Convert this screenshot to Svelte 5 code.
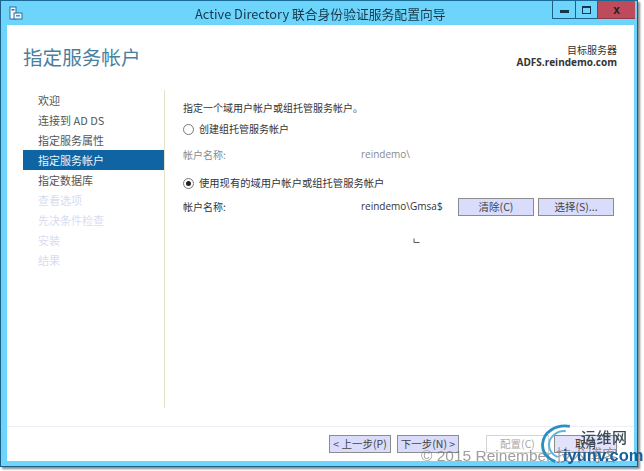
<script>
  const steps = [
    { label: '欢迎', state: 'done' },
    { label: '连接到 AD DS', state: 'done' },
    { label: '指定服务属性', state: 'done' },
    { label: '指定服务帐户', state: 'active' },
    { label: '指定数据库', state: 'done' },
    { label: '查看选项', state: 'off' },
    { label: '先决条件检查', state: 'off' },
    { label: '安装', state: 'off' },
    { label: '结果', state: 'off' }
  ];
</script>

<div class="stage">
  <div class="window">
    <header class="titlebar">
      <svg class="appicon" viewBox="0 0 14 14" width="14" height="14">
        <rect x="1" y="1" width="6" height="12" fill="#f4fbff" stroke="#2f6d9c" stroke-width="1" />
        <rect x="2.5" y="3" width="3" height="1.5" fill="#2f6d9c" />
        <rect x="5" y="7" width="8" height="6" fill="#e8f6ff" stroke="#2f6d9c" stroke-width="1" />
        <rect x="7" y="9" width="4" height="1.5" fill="#4f8fbd" />
      </svg>
      <div class="title">Active Directory 联合身份验证服务配置向导</div>
      <div class="controls">
        <div class="ctl min"><span></span></div>
        <div class="ctl max"><span></span></div>
        <div class="ctl close">x</div>
      </div>
    </header>

    <div class="client">
      <div class="head">
        <h1>指定服务帐户</h1>
        <div class="target">
          <div>目标服务器</div>
          <div class="server">ADFS.reindemo.com</div>
        </div>
      </div>

      <div class="body">
        <nav class="steps">
          {#each steps as s}
            <div class="step {s.state}">{s.label}</div>
          {/each}
        </nav>

        <main class="pane">
          <p class="lead">指定一个域用户帐户或组托管服务帐户。</p>
          <div class="radio r1"><i class="dot"></i>创建组托管服务帐户</div>
          <div class="field f1 dim"><span class="k">帐户名称:</span><span class="v">reindemo\</span></div>
          <div class="radio r2"><i class="dot on"></i>使用现有的域用户帐户或组托管服务帐户</div>
          <div class="field f2">
            <span class="k">帐户名称:</span><span class="v">reindemo\Gmsa$</span>
            <button class="btn b1">清除(C)</button>
            <button class="btn b2">选择(S)...</button>
          </div>
          <svg class="cursor" width="7" height="6" viewBox="0 0 7 6"><path d="M1 0.5V4.5H6.5" fill="none" stroke="#555" stroke-width="1" /></svg>
        </main>
      </div>

      <footer class="foot">
        <button class="btn nav">&lt; 上一步(P)</button>
        <button class="btn nav next">下一步(N) &gt;</button>
        <button class="btn nav disabled">配置(C)</button>
        <button class="btn nav cancel">取消</button>
      </footer>
    </div>
  </div>

  <div class="copy">© 2015 Reinember 技术博客</div>
  <div class="logo">
    <svg class="arc" width="50" height="40" viewBox="0 0 62 50">
      <path d="M37 3C20 0 4 10 3 25C2 36 10 44 19 47" fill="none" stroke="#2b8fc4" stroke-width="3.5" />
      <path d="M32 9C21 8 11 16 11 26C11 33 15 38 21 41" fill="none" stroke="#5db4dd" stroke-width="2.5" />
    </svg>
    <div class="cn">运维网</div>
    <div class="en">iyunv.com</div>
  </div>
</div>

<style>
  :global(body) {
    margin: 0;
    background: #fff;
  }
  .stage {
    position: relative;
    width: 644px;
    height: 471px;
    overflow: hidden;
    font-family: "Noto Sans CJK SC", "Noto Sans", sans-serif;
    font-size: 10px;
    color: #333;
  }
  .window {
    width: 638px;
    height: 467px;
    box-sizing: border-box;
    display: flex;
    flex-direction: column;
    background: #6dd5fb;
    border: 1px solid #1d5f86;
    border-top-color: #1a6a96;
    box-shadow: 2px 2px 2px #8a8a8a;
    filter: blur(0.35px);
  }
  .titlebar {
    height: 24px;
    flex: none;
    display: flex;
    align-items: flex-start;
    position: relative;
  }
  .appicon {
    margin: 5px 0 0 8px;
  }
  .title {
    position: absolute;
    left: 194px;
    top: 5px;
    font-size: 12.8px;
    line-height: 16px;
    color: #17384c;
    white-space: nowrap;
  }
  .controls {
    margin-left: auto;
    margin-right: 2px;
    display: flex;
    height: 18px;
  }
  .ctl {
    height: 18px;
    box-sizing: border-box;
    display: flex;
    align-items: center;
    justify-content: center;
    border-bottom: 1px solid #1d5f86;
    border-left: 1px solid #1d5f86;
  }
  .min { width: 23px; }
  .min span { width: 9px; height: 3px; background: #17384c; margin-top: 3px; }
  .max { width: 22px; }
  .max span { width: 9px; height: 8px; box-sizing: border-box; border: 1px solid #17384c; border-top-width: 2px; }
  .close {
    width: 38px;
    background: #bd4b5c;
    color: #222;
    font: bold 12px "Liberation Sans", sans-serif;
    border-color: #8d3a48;
  }
  .client {
    flex: 1;
    margin: 0 3px 5px 6px;
    background: #fff;
    display: flex;
    flex-direction: column;
    min-height: 0;
  }
  .head {
    height: 65px;
    flex: none;
    display: flex;
    justify-content: space-between;
    box-sizing: border-box;
    padding: 20px 17px 0 16px;
  }
  h1 {
    margin: 0;
    font-size: 19.6px;
    line-height: 24px;
    font-weight: 400;
    color: #4b7f9f;
  }
  .target {
    text-align: right;
    font-size: 10px;
    line-height: 13px;
    margin-top: -2px;
    color: #333;
  }
  .server {
    font-weight: 700;
    font-family: "Open Sans", "Noto Sans", sans-serif;
    font-size: 10px;
  }
  .body {
    height: 318px;
    flex: none;
    display: flex;
  }
  .steps {
    width: 141px;
    margin-left: 16px;
    flex: none;
    border-right: 1px solid #e4e2c8;
    box-sizing: content-box;
    font-size: 11px;
  }
  .step {
    height: 20px;
    line-height: 20px;
    padding-left: 15px;
    white-space: nowrap;
    color: #555;
  }
  .step.active { background: #0f64a3; color: #eaf4ff; }
  .step.off { color: #d8dcf0; }
  .pane {
    position: relative;
    flex: 1;
    padding-left: 18px;
  }
  .lead {
    margin: 0;
    padding-top: 11px;
    height: 14px;
    line-height: 14px;
  }
  .radio {
    display: flex;
    align-items: center;
    gap: 5px;
    height: 14px;
    line-height: 14px;
    white-space: nowrap;
  }
  .r1 { margin-top: 7px; }
  .r2 { margin-top: 13px; font-size: 10.3px; }
  .dot {
    width: 9px;
    height: 9px;
    flex: none;
    border: 1px solid #777;
    border-radius: 50%;
    background: #fff;
    position: relative;
  }
  .dot.on::after {
    content: "";
    position: absolute;
    left: 2px;
    top: 2px;
    width: 5px;
    height: 5px;
    border-radius: 50%;
    background: #222;
  }
  .field {
    display: flex;
    align-items: center;
    height: 18px;
  }
  .f1 { margin-top: 9px; }
  .f2 { margin-top: 8px; }
  .f2 .k, .f2 .v { margin-bottom: 2px; }
  .k { width: 178px; flex: none; }
  .v {
    font-family: "Open Sans", "Noto Sans", sans-serif;
    font-size: 10px;
    width: 97px;
    flex: none;
    white-space: nowrap;
  }
  .dim { color: #8a8a8a; }
  .btn {
    box-sizing: border-box;
    height: 18px;
    padding: 0;
    border: 1px solid #8c8c8c;
    border-radius: 0;
    background: #dadcfb;
    color: #444;
    font: inherit;
    font-size: 10.5px;
    line-height: 14px;
    white-space: nowrap;
  }
  .b1 { width: 76px; }
  .b2 { width: 76px; margin-left: 4px; }
  .cursor {
    position: absolute;
    left: 248px;
    top: 148px;
  }
  .foot {
    height: 36px;
    flex: none;
    box-sizing: border-box;
    margin-top: 18px;
    border-top: 1px solid #eeeef6;
    display: flex;
    padding: 8px 0 0 322px;
  }
  .nav { width: 62px; }
  .next { margin-left: 6px; }
  .disabled {
    margin-left: 27px;
    width: 63px;
    background: #fff;
    border-color: #d4d4d4;
    color: #a9a9a9;
  }
  .cancel {
    margin-left: 5px;
    width: 63px;
    color: #222;
    background: #e2e3fb;
  }
  .copy {
    position: absolute;
    left: 421px;
    top: 446px;
    font-family: "Liberation Sans", "Noto Sans CJK SC", sans-serif;
    font-size: 15.5px;
    line-height: 20px;
    white-space: nowrap;
    color: rgba(120, 120, 120, 0.72);
    filter: blur(0.3px);
  }
  .logo {
    position: absolute;
    left: 540px;
    top: 424px;
    width: 104px;
    height: 47px;
    filter: blur(0.3px);
  }
  .arc {
    position: absolute;
    left: 0;
    top: 0;
  }
  .cn {
    position: absolute;
    left: 41px;
    top: 4px;
    font-size: 15px;
    line-height: 18px;
    font-weight: 500;
    color: #3c4a56;
    letter-spacing: 0.5px;
    white-space: nowrap;
  }
  .en {
    position: absolute;
    left: 23px;
    top: 21px;
    font-family: "Liberation Sans", sans-serif;
    font-size: 16.5px;
    line-height: 20px;
    font-weight: 700;
    color: #15619f;
    white-space: nowrap;
  }
</style>
